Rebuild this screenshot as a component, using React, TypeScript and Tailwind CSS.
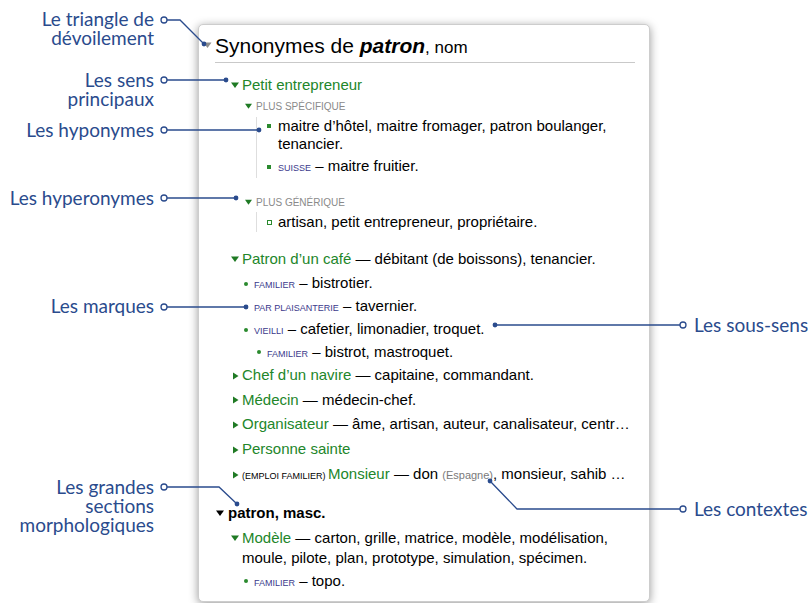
import type { ReactNode } from "react";

const GREEN = "text-[#22862a]";

function Down({ color = "#1f7a24", w = 8 }: { color?: string; w?: number }) {
  return (
    <svg width={w} height={6} viewBox="0 0 8 6" className="shrink-0">
      <path d="M0 0.5h8L4 6z" fill={color} />
    </svg>
  );
}

function Right() {
  return (
    <svg width={7} height={8} viewBox="0 0 7 8" className="shrink-0">
      <path d="M1 0.5v7L6.5 4z" fill="#1f7a24" />
    </svg>
  );
}

function Dot() {
  return <span className="h-[4px] w-[4px] shrink-0 rounded-full bg-[#2a8a2e]" />;
}

function Reg({ children }: { children: ReactNode }) {
  return <span className="text-[9px] uppercase text-[#3b3a8c]">{children}</span>;
}

// sub-sense line: dot, register, dash, synonyms
function SubSense({ indent, reg, text, h }: { indent: string; reg: string; text: string; h: string }) {
  return (
    <div className={`flex items-center gap-[6px] ${indent} ${h}`}>
      <Dot />
      <span>
        <Reg>{reg}</Reg> – {text}
      </span>
    </div>
  );
}

function Sense({ open, label, rest, h = "h-[25px]", pre, note }: { open?: boolean; label: string; rest?: string; h?: string; pre?: ReactNode; note?: ReactNode }) {
  return (
    <div className={`flex items-center gap-[3px] pl-[32px] ${h}`}>
      <span className="flex w-[8px] justify-center">{open ? <Down /> : <Right />}</span>
      <span className="whitespace-nowrap">
        {pre}
        <span className={GREEN}>{label}</span>
        {rest && <> — {note}{rest}</>}
      </span>
    </div>
  );
}

function Label({ top, lines, right }: { top: string; lines: string[]; right?: boolean }) {
  return (
    <div
      className={`absolute ${top} ${right ? "left-[694px] text-left" : "left-0 w-[154px] text-right"} text-[19px] leading-[19px] text-[#2a4b8d]`}
      style={{ fontFamily: "Lato, 'Open Sans', sans-serif" }}
    >
      {lines.map((l) => (
        <div key={l} className="whitespace-nowrap">{l}</div>
      ))}
    </div>
  );
}

export default function App() {
  const blue = "#2a4b8d";
  const hollow = [
    [164, 20], [164, 80], [164, 130], [164, 198], [164, 307], [164, 487], [683, 325], [683, 509],
  ];
  const filled = [
    [204, 44], [226, 80], [259, 130], [236, 198], [246, 307], [237, 504], [495, 325], [490, 481],
  ];

  return (
    <div
      className="relative h-[603px] w-[808px] overflow-hidden bg-white pl-[198px] pt-[24px]"
      style={{ fontFamily: "'Liberation Sans', Arial, sans-serif" }}
    >
      {/* Dictionary panel */}
      <div className="h-[578px] w-[452px] rounded-[5px] border border-[#cdcdcd] bg-white text-[15px] text-black shadow-[0_2px_10px_rgba(0,0,0,0.4)]">
        <div className="flex h-[37px] items-center gap-[3px] pl-[4px] pt-[3px]">
          <Down color="#8d8d8d" w={9} />
          <span className="whitespace-nowrap text-[21px] leading-none">
            Synonymes de <b className="italic">patron</b>
            <span className="text-[17px]">, nom</span>
          </span>
        </div>
        <div className="ml-[16px] h-px w-[420px] bg-[#c9c9c9]" />

        <div className="pr-[14px]">
          {/* Petit entrepreneur */}
          <div className="mt-[10px]">
            <Sense open label="Petit entrepreneur" h="h-[24px]" />
          </div>
          <div className="flex h-[18px] items-center gap-[4px] pl-[46px]">
            <Down w={7} />
            <span className="text-[10px] uppercase text-[#8a8a8a]">Plus spécifique</span>
          </div>
          <div className="ml-[57px] mt-[2px] border-l border-[#dedede] pb-[1px] pl-[10px] leading-[18px]">
            <div className="flex gap-[7px]">
              <span className="mt-[7px] h-[4px] w-[4px] shrink-0 bg-[#2a8a2e]" />
              <span>maitre d’hôtel, maitre fromager, patron boulanger, tenancier.</span>
            </div>
            <div className="mt-[4px] flex items-center gap-[7px]">
              <span className="h-[4px] w-[4px] shrink-0 bg-[#2a8a2e]" />
              <span>
                <Reg>Suisse</Reg> – maitre fruitier.
              </span>
            </div>
          </div>

          <div className="mt-[15px] flex h-[18px] items-center gap-[4px] pl-[46px]">
            <Down w={7} />
            <span className="text-[10px] uppercase text-[#8a8a8a]">Plus générique</span>
          </div>
          <div className="ml-[57px] mt-[1px] border-l border-[#dedede] py-[1px] pl-[10px] leading-[18px]">
            <div className="flex items-center gap-[6px]">
              <span className="h-[5px] w-[5px] shrink-0 border border-[#2a8a2e]" />
              <span>artisan, petit entrepreneur, propriétaire.</span>
            </div>
          </div>

          {/* Patron d'un café */}
          <div className="mt-[15px]">
            <Sense open label="Patron d’un café" rest="débitant (de boissons), tenancier." h="h-[24px]" />
          </div>
          <div className="mt-[1px]">
            <SubSense indent="pl-[45px]" reg="familier" text="bistrotier." h="h-[23px]" />
            <SubSense indent="pl-[45px]" reg="par plaisanterie" text="tavernier." h="h-[23px]" />
            <SubSense indent="pl-[45px]" reg="vieilli" text="cafetier, limonadier, troquet." h="h-[23px]" />
            <SubSense indent="pl-[58px]" reg="familier" text="bistrot, mastroquet." h="h-[22px]" />
          </div>

          <Sense label="Chef d’un navire" rest="capitaine, commandant." />
          <Sense label="Médecin" rest="médecin-chef." h="h-[24px]" />
          <Sense label="Organisateur" rest="âme, artisan, auteur, canalisateur, centr…" />
          <Sense label="Personne sainte" />
          <Sense
            label="Monsieur"
            pre={<span className="text-[9px] uppercase">(emploi familier) </span>}
            rest=", monsieur, sahib …"
            note={
              <>
                don <span className="text-[11px] text-[#7a7a7a]">(Espagne)</span>
              </>
            }
          />

          {/* patron, masc. */}
          <div className="mt-[14px] flex h-[24px] items-center gap-[4px] pl-[17px]">
            <Down color="#000" w={8} />
            <span className="font-bold">patron, masc.</span>
          </div>
          <div className="mt-[3px] flex gap-[3px] pl-[32px] leading-[20px]">
            <span className="flex h-[20px] w-[8px] shrink-0 items-center justify-center">
              <Down />
            </span>
            <span>
              <span className={GREEN}>Modèle</span> — carton, grille, matrice, modèle, modélisation, moule, pilote, plan,
              prototype, simulation, spécimen.
            </span>
          </div>
          <div className="mt-[2px]">
            <SubSense indent="pl-[45px]" reg="familier" text="topo." h="h-[22px]" />
          </div>
        </div>
      </div>

      {/* Callout labels */}
      <Label top="top-[9px]" lines={["Le triangle de", "dévoilement"]} />
      <Label top="top-[70px]" lines={["Les sens", "principaux"]} />
      <Label top="top-[120px]" lines={["Les hyponymes"]} />
      <Label top="top-[188px]" lines={["Les hyperonymes"]} />
      <Label top="top-[296px]" lines={["Les marques"]} />
      <Label top="top-[477px]" lines={["Les grandes", "sections", "morphologiques"]} />
      <Label top="top-[315px]" lines={["Les sous-sens"]} right />
      <Label top="top-[499px]" lines={["Les contextes"]} right />

      {/* Connector lines */}
      <svg className="pointer-events-none absolute left-0 top-0" width={808} height={603}>
        <g fill="none" stroke={blue} strokeWidth={1.3}>
          <path d="M167 20H180L204 44" />
          <path d="M167 80H226" />
          <path d="M167 130H259" />
          <path d="M167 198H236" />
          <path d="M167 307H246" />
          <path d="M167 487H219L237 504" />
          <path d="M495 325H680" />
          <path d="M490 481L517 509H680" />
        </g>
        {hollow.map(([x, y]) => (
          <circle key={`h${x}-${y}`} cx={x} cy={y} r={3} fill="white" stroke={blue} strokeWidth={1.3} />
        ))}
        {filled.map(([x, y]) => (
          <circle key={`f${x}-${y}`} cx={x} cy={y} r={2.4} fill={blue} />
        ))}
      </svg>
    </div>
  );
}
